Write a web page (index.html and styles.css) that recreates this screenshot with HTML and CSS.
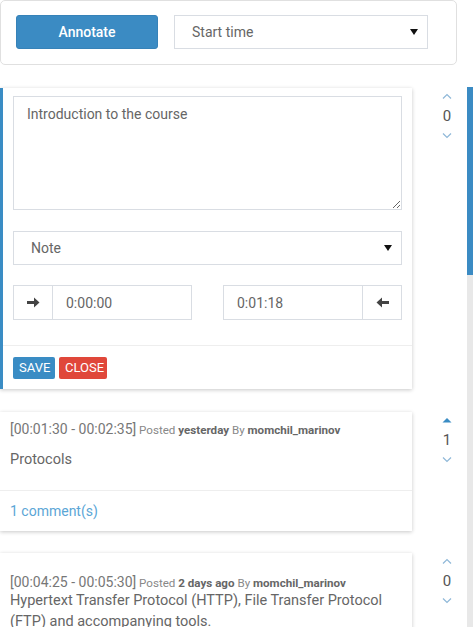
FILE: index.html
```
<!DOCTYPE html>
<html>
<head>
<meta charset="utf-8">
<link rel="stylesheet" href="styles.css">
</head>
<body>
<div class="toolbar">
  <button class="btn-annotate">Annotate</button>
  <div class="select select-top"><span>Start time</span><svg class="caret" width="8" height="6" viewBox="0 0 8 6"><path d="M0 0H8L4 6Z"/></svg></div>
</div>

<div class="list">
  <div class="item">
    <div class="card card-edit">
      <textarea class="ta">Introduction to the course</textarea>
      <div class="select select-note"><span>Note</span><svg class="caret" width="8" height="6" viewBox="0 0 8 6"><path d="M0 0H8L4 6Z"/></svg></div>
      <div class="times">
        <div class="tgroup">
          <span class="tbtn"><svg width="13" height="11" viewBox="0 0 13 11"><path d="M0 4H7V0.5L12.5 5.5L7 10.5V7H0Z" fill="#444"/></svg></span>
          <input class="tinput" value="0:00:00">
        </div>
        <div class="tgroup">
          <input class="tinput" value="0:01:18">
          <span class="tbtn"><svg width="13" height="11" viewBox="0 0 13 11"><path d="M13 4H6V0.5L0.5 5.5L6 10.5V7H13Z" fill="#444"/></svg></span>
        </div>
      </div>
      <div class="edit-footer">
        <button class="sbtn save">SAVE</button>
        <button class="sbtn close">CLOSE</button>
      </div>
    </div>
    <div class="votes">
      <svg class="chev" width="10" height="6" viewBox="0 0 10 6"><path d="M1 5.5L5 1.5L9 5.5" fill="none" stroke="#8fb8d8" stroke-width="1.2"/></svg>
      <span class="count">0</span>
      <svg class="chev" width="10" height="6" viewBox="0 0 10 6"><path d="M1 0.5L5 4.5L9 0.5" fill="none" stroke="#8fb8d8" stroke-width="1.2"/></svg>
    </div>
  </div>

  <div class="item">
    <div class="card">
      <div class="card-body">
        <div class="meta"><span class="range">[00:01:30 - 00:02:35]</span> Posted <b>yesterday</b> By <b>momchil_marinov</b></div>
        <div class="text">Protocols</div>
      </div>
      <div class="card-footer"><a class="comments">1 comment(s)</a></div>
    </div>
    <div class="votes">
      <svg class="chev" width="10" height="6" viewBox="0 0 10 6"><path d="M0.5 5.5L5 1L9.5 5.5Z" fill="#3a8cc4"/></svg>
      <span class="count">1</span>
      <svg class="chev" width="10" height="6" viewBox="0 0 10 6"><path d="M1 0.5L5 4.5L9 0.5" fill="none" stroke="#8fb8d8" stroke-width="1.2"/></svg>
    </div>
  </div>

  <div class="item">
    <div class="card">
      <div class="card-body body-3">
        <div class="meta"><span class="range">[00:04:25 - 00:05:30]</span> Posted <b>2 days ago</b> By <b>momchil_marinov</b></div>
        <div class="text">Hypertext Transfer Protocol (HTTP), File Transfer Protocol (FTP) and accompanying tools.</div>
      </div>
    </div>
    <div class="votes">
      <svg class="chev" width="10" height="6" viewBox="0 0 10 6"><path d="M1 5.5L5 1.5L9 5.5" fill="none" stroke="#8fb8d8" stroke-width="1.2"/></svg>
      <span class="count">0</span>
      <svg class="chev" width="10" height="6" viewBox="0 0 10 6"><path d="M1 0.5L5 4.5L9 0.5" fill="none" stroke="#8fb8d8" stroke-width="1.2"/></svg>
    </div>
  </div>
</div>

<div class="scrollbar"><div class="thumb"></div></div>
</body>
</html>
```
FILE: styles.css
```
* { box-sizing: border-box; }
html, body { margin: 0; padding: 0; }
body {
  width: 473px;
  height: 627px;
  overflow: hidden;
  position: relative;
  background: #fff;
  font-family: Roboto, "Liberation Sans", Arial, sans-serif;
  font-size: 14px;
  color: #666;
}
.toolbar {
  width: 457px;
  height: 65px;
  border: 1px solid #e0e0e0;
  border-radius: 5px;
  display: flex;
  align-items: flex-start;
  gap: 16px;
  padding: 14px 0 0 15px;
}
.btn-annotate {
  width: 142px;
  height: 34px;
  background: #3b8bc3;
  color: #fff;
  border: 1px solid #3682b8;
  border-radius: 3px;
  font-family: inherit;
  font-size: 14px;
  font-weight: 500;
  padding: 0;
}
.select {
  height: 34px;
  border: 1px solid #d9dde3;
  background: #fff;
  display: flex;
  align-items: center;
  justify-content: space-between;
  padding: 0 9px 0 17px;
  color: #666;
  font-size: 14px;
}
.select-top { width: 254px; }
.caret { fill: #111; }
.list {
  margin-top: 23px;
  display: flex;
  flex-direction: column;
  gap: 23px;
}
.item { display: flex; align-items: flex-start; }
.item:last-child { margin-top: -1px; }
.card {
  width: 412px;
  flex: none;
  background: #fff;
  box-shadow: 0 1px 4px rgba(0, 0, 0, 0.22);
}
.card-edit {
  border-left: 3px solid #3a8cc4;
  padding-top: 8px;
}
.ta {
  display: block;
  width: 389px;
  height: 114px;
  margin-left: 10px;
  border: 1px solid #d9dde3;
  padding: 8px 13px;
  font-family: inherit;
  font-size: 14px;
  line-height: 18px;
  color: #666;
  resize: vertical;
}
.select-note {
  width: 389px;
  margin: 21px 0 0 10px;
}
.times {
  margin: 20px 0 0 10px;
  width: 389px;
  display: flex;
  justify-content: space-between;
}
.tgroup {
  display: flex;
  height: 35px;
  border: 1px solid #d9dde3;
  width: 179px;
}
.tbtn {
  width: 39px;
  flex: none;
  display: flex;
  align-items: center;
  justify-content: center;
}
.tgroup .tbtn:first-child { border-right: 1px solid #d9dde3; }
.tgroup .tbtn:last-child { border-left: 1px solid #d9dde3; }
.tinput {
  flex: 1;
  min-width: 0;
  border: none;
  outline: none;
  font-family: inherit;
  font-size: 14px;
  color: #666;
  padding: 0 13px;
  background: transparent;
}
.edit-footer {
  margin-top: 25px;
  border-top: 1px solid #eee;
  padding: 11px 0 10px 10px;
  display: flex;
  gap: 4px;
}
.sbtn {
  height: 22px;
  border: none;
  border-radius: 2px;
  color: #fff;
  font-family: inherit;
  font-size: 13px;
  padding: 0 6px;
  line-height: 22px;
}
.save { background: #3a8cc4; width: 42px; }
.close { background: #e0473a; width: 48px; }
.votes {
  width: 38px;
  margin-left: 16px;
  padding-top: 5px;
  display: flex;
  flex-direction: column;
  align-items: center;
}
.count {
  font-size: 15px;
  color: #555;
  line-height: 20px;
  margin: 7px 0 7px;
}
.card-body {
  padding: 8px 10px 20px 10px;
}
.meta {
  font-size: 11.6px;
  line-height: 18px;
  color: #888;
}
.meta .range { font-size: 14px; color: #777; }
.meta b { color: #666; font-weight: 700; }
.text {
  margin-top: 10px;
  line-height: 21px;
  font-size: 14.5px;
  color: #666;
}
.body-3 { padding-top: 20px; }
.body-3 .text { margin-top: -2px; }
.card-footer {
  border-top: 1px solid #eee;
  padding: 10px 10px 10px 10px;
  line-height: 20px;
}
.comments { color: #5ba6d6; font-size: 14px; }
.scrollbar {
  position: absolute;
  right: 0;
  top: 87px;
  width: 6px;
  height: 540px;
  background: #e8e8e8;
}
.thumb {
  height: 188px;
  background: #3b8bc3;
}
```
